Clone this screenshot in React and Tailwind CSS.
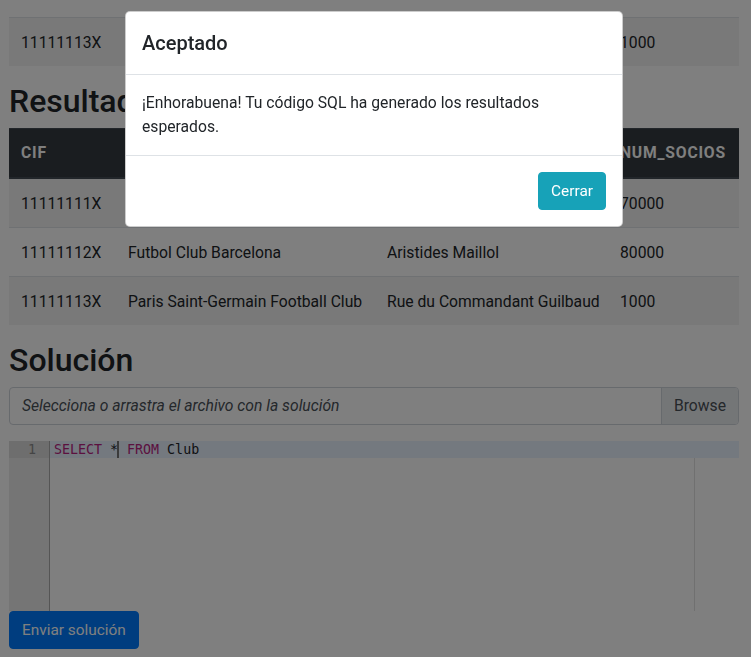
import clsx from "clsx";

const rows = [
    ["11111111X", "Real Madrid Club de Fútbol", "Concha Espina", "70000"],
    ["11111112X", "Futbol Club Barcelona", "Aristides Maillol", "80000"],
    ["11111113X", "Paris Saint-Germain Football Club", "Rue du Commandant Guilbaud", "1000"],
];

const widths = ["w-[107px]", "w-[259px]", "w-[233px]", "w-[131px]"];

function Row({ row, striped }) {
    return (
        <tr className={clsx("border-t border-[#dee2e6]", striped && "bg-[#f2f2f2]")}>
            {row.map((c, i) =>
                <td key={i} className="px-3 pt-[13px] pb-[11px] leading-6 whitespace-nowrap">{c}</td>
            )}
        </tr>
    );
}

export default function App() {
    return (
        <div className="relative min-h-screen bg-white font-[Roboto,sans-serif] text-[15.7px] text-[#212529]">
            <div className="ml-[9px] w-[730px] pt-[17px]">
                <table className="w-full table-fixed border-collapse mb-4">
                    <colgroup>
                        {widths.map((w, i) => <col key={i} className={w} />)}
                    </colgroup>
                    <tbody>
                        <Row row={rows[2]} striped />
                    </tbody>
                </table>

                <h2 className="text-[32px] font-medium leading-[1.2] mb-2">Resultado esperado</h2>
                <table className="w-full table-fixed border-collapse mb-4">
                    <colgroup>
                        {widths.map((w, i) => <col key={i} className={w} />)}
                    </colgroup>
                    <thead>
                        <tr className="bg-[#343a40] text-white">
                            {["CIF", "NOMBRE", "DIRECCION", "NUM_SOCIOS"].map((h, i) =>
                                <th key={i} className="px-3 py-3 leading-6 text-left font-bold tracking-[0.8px] border-t border-[#454d55] border-b-2 border-b-[#454d55] whitespace-nowrap">{h}</th>
                            )}
                        </tr>
                    </thead>
                    <tbody>
                        {rows.map((r, i) => <Row key={i} row={r} striped={i % 2 === 0} />)}
                    </tbody>
                </table>

                <h2 className="text-[32px] font-medium leading-[1.2] mb-[7px]">Solución</h2>
                <div className="flex h-[38px] mb-4 rounded border border-[#ced4da] overflow-hidden">
                    <div className="flex-1 px-3 flex items-center italic text-[#495057]">Selecciona o arrastra el archivo con la solución</div>
                    <div className="px-3 flex items-center bg-[#e9ecef] border-l border-[#ced4da] text-[#495057]">Browse</div>
                </div>

                <div className="relative flex h-[170px] font-['DejaVu_Sans_Mono',monospace] text-[13.3px] leading-[17px]">
                    <div className="w-[41px] bg-[#ebebeb] border-r border-[#aaaaaa] text-[#8a8a8a]">
                        <div className="bg-[#dcdcdc] h-[17px] pr-[13px] text-right">1</div>
                    </div>
                    <div className="relative flex-1">
                        <div className="absolute left-[644px] top-0 bottom-0 w-px bg-[#e0e0e0]"></div>
                        <div className="relative h-[17px] bg-[#e8f2ff] pl-[4px] whitespace-pre">
                            <span className="text-[#b8227f]">SELECT</span> *<span className="inline-block w-[2px] h-[17px] bg-[#777] align-top -ml-px"></span> <span className="text-[#b8227f]">FROM</span> Club
                        </div>
                    </div>
                </div>

                <button className="block bg-[#007bff] text-white text-[15.4px] rounded px-3 py-1.5 leading-6 border border-[#007bff]">Enviar solución</button>
            </div>

            <div className="fixed inset-0 bg-black/50"></div>

            <div className="fixed left-[125px] top-[11px] w-[498px] bg-white rounded-[5px] border border-black/20">
                <div className="p-4 border-b border-[#dee2e6]">
                    <h5 className="text-xl font-medium leading-[30px]">Aceptado</h5>
                </div>
                <div className="p-4 leading-6">
                    ¡Enhorabuena! Tu código SQL ha generado los resultados esperados.
                </div>
                <div className="p-3 border-t border-[#dee2e6] flex justify-end">
                    <button className="m-1 bg-[#17a2b8] text-white text-[15.4px] rounded px-3 py-1.5 leading-6 border border-[#17a2b8]">Cerrar</button>
                </div>
            </div>
        </div>
    );
}
